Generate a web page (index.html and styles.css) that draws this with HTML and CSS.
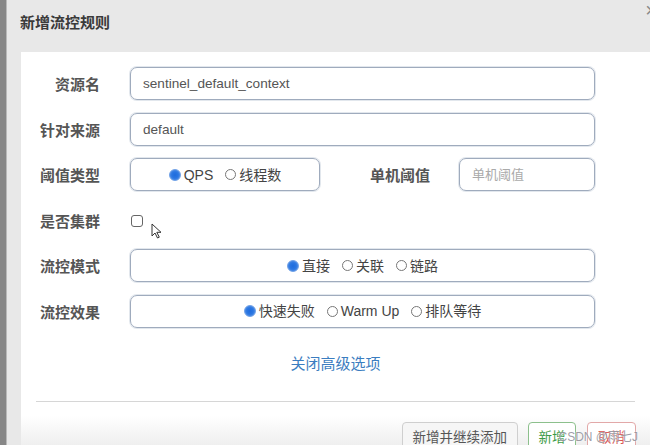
FILE: index.html
```html
<!DOCTYPE html>
<html>
<head>
    <meta charset="utf-8">
	<title>新增流控规则</title>
	<link rel="stylesheet" href="styles.css">
</head>
<body>
  <div class="screen">
    <div class="backdrop"></div>
    <div class="modal">
      <div class="modal_head">
        <span class="title">新增流控规则</span>
        <span class="close">×</span>
      </div>
      <div class="modal_body">
        <div class="form">
          <div class="lbl">资源名</div>
          <div class="ctl"><div class="input">sentinel_default_context</div></div>

          <div class="lbl">针对来源</div>
          <div class="ctl"><div class="input">default</div></div>

          <div class="lbl">阈值类型</div>
          <div class="ctl split">
            <div class="radio_box small">
              <span class="radio on"></span><span class="opt">QPS</span>
              <span class="radio"></span><span class="opt">线程数</span>
            </div>
            <div class="lbl inner">单机阈值</div>
            <div class="input short placeholder">单机阈值</div>
          </div>

          <div class="lbl">是否集群</div>
          <div class="ctl check_row">
            <span class="checkbox"></span>
            <svg class="cursor" width="11" height="16" viewBox="0 0 11 16">
              <path d="M1 1 L1 13 L4 10 L6.5 15 L8.3 14.2 L5.8 9.3 L10 9.3 Z" fill="#fff" stroke="#333" stroke-width="1" stroke-linejoin="round"/>
            </svg>
          </div>

          <div class="lbl">流控模式</div>
          <div class="ctl">
            <div class="radio_box">
              <span class="radio on"></span><span class="opt">直接</span>
              <span class="radio"></span><span class="opt">关联</span>
              <span class="radio"></span><span class="opt">链路</span>
            </div>
          </div>

          <div class="lbl">流控效果</div>
          <div class="ctl">
            <div class="radio_box">
              <span class="radio on"></span><span class="opt">快速失败</span>
              <span class="radio"></span><span class="opt">Warm Up</span>
              <span class="radio"></span><span class="opt">排队等待</span>
            </div>
          </div>
        </div>

        <div class="adv"><a>关闭高级选项</a></div>
        <div class="divider"></div>

        <div class="footer">
          <div class="btn">新增并继续添加</div>
          <div class="btn green">新增</div>
          <div class="btn red">取消</div>
          <span class="mark">CSDN @雨七J</span>
        </div>
      </div>
    </div>
  </div>
</body>
</html>
```

FILE: styles.css
```css
html, body {
  margin: 0;
  padding: 0;
}
body {
  width: 650px;
  height: 445px;
  overflow: hidden;
  font-family: "Liberation Sans", "Noto Sans CJK SC", sans-serif;
  color: #555;
}
.screen {
  display: flex;
  height: 445px;
}
.backdrop {
  width: 6px;
  background: #878787;
  border-right: 1px solid #b9b9b9;
}
.modal {
  flex: 1;
  display: flex;
  flex-direction: column;
  background: #e8e8e8;
  overflow: hidden;
}
.modal_head {
  flex-shrink: 0;
  height: 52px;
  display: flex;
  justify-content: space-between;
  align-items: flex-start;
  padding-left: 13px;
}
.title {
  margin-top: 13px;
  font-size: 15px;
  line-height: 20px;
  font-weight: bold;
  color: #3a3a3a;
}
.close {
  margin-top: 0;
  margin-right: -7px;
  font-size: 20px;
  line-height: 20px;
  color: #888;
}
.modal_body {
  flex: 1;
  margin-left: 14px;
  background: linear-gradient(#fff 0, #fff 90%, #e9e9e9 100%);
  padding-top: 15px;
}
.form {
  display: grid;
  grid-template-columns: 79px 465px;
  column-gap: 30px;
  row-gap: 12.6px;
  grid-auto-rows: 33px;
}
.lbl {
  display: flex;
  align-items: center;
  justify-content: flex-end;
  font-size: 15px;
  font-weight: bold;
  color: #555;
}
.ctl {
  display: flex;
  align-items: center;
}
.input {
  flex: 1;
  box-sizing: border-box;
  height: 33px;
  border: 1px solid #9fabbd;
  box-shadow: 0 0 0 1px rgba(160, 174, 194, 0.3);
  border-radius: 7px;
  padding-left: 12px;
  font-size: 13.6px;
  line-height: 31px;
  color: #555;
}
.input.short {
  flex: none;
  width: 136px;
}
.placeholder {
  color: #aaa;
  font-size: 13px;
}
.split .lbl.inner {
  flex: 1;
  height: 33px;
  padding-right: 29px;
}
.radio_box {
  flex: 1;
  box-sizing: border-box;
  height: 33px;
  border: 1px solid #9fabbd;
  box-shadow: 0 0 0 1px rgba(160, 174, 194, 0.3);
  border-radius: 7px;
  display: flex;
  align-items: center;
  justify-content: center;
  font-size: 14px;
  color: #444;
}
.radio_box.small {
  flex: none;
  width: 190px;
}
.radio {
  box-sizing: border-box;
  width: 11px;
  height: 11px;
  border: 1px solid #777;
  border-radius: 50%;
  margin-right: 3px;
  margin-left: 12px;
}
.radio:first-child {
  margin-left: 0;
}
.radio.on {
  width: 12px;
  height: 12px;
  border: 1px solid #6d9fe6;
  background: radial-gradient(circle, #1f6cdd 0, #2a76e2 45%, #6a9fe8 100%);
}
.opt {
  line-height: 20px;
}
.check_row {
  position: relative;
}
.checkbox {
  box-sizing: border-box;
  width: 12px;
  height: 12px;
  margin-left: 1px;
  margin-top: 2px;
  border: 1.5px solid #666;
  border-radius: 3px;
  background: #fff;
}
.cursor {
  position: absolute;
  left: 21px;
  top: 19px;
}
.adv {
  margin-top: 25px;
  text-align: center;
  font-size: 15px;
  line-height: 22px;
}
.adv a {
  color: #3b7dc0;
}
.divider {
  margin: 26px 15px 0 15px;
  height: 1px;
  background: #d6d6d6;
}
.footer {
  position: relative;
  display: flex;
  justify-content: flex-end;
  gap: 10px;
  padding-top: 20px;
  padding-right: 14px;
}
.btn {
  box-sizing: border-box;
  height: 34px;
  padding: 0 10px;
  border: 1px solid #cfcfcf;
  border-radius: 4px;
  background: #f6f6f6;
  font-size: 13.5px;
  line-height: 30px;
  color: #555;
}
.btn.green {
  width: 48px;
  border-color: #8cc08c;
  background: #fff;
  color: #3c9a46;
  text-align: center;
  padding: 0;
}
.btn.red {
  width: 49px;
  margin-left: 1px;
  border-color: #e2a8a8;
  background: #fff;
  color: #d9534f;
  text-align: center;
  padding: 0;
}
.mark {
  position: absolute;
  right: 12px;
  top: 25px;
  font-size: 12px;
  color: rgba(140, 140, 150, 0.85);
  text-shadow: 0 0 2px #fff;
}
```
